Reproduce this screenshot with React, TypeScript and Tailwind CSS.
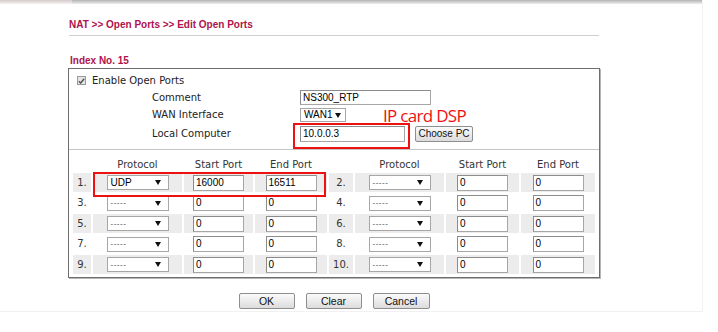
import React from "react";

const label = "font-['DejaVu_Sans',Verdana,sans-serif] text-[10px] leading-[12px] text-[#222]";
const arial = "font-['Liberation_Sans',Arial,sans-serif]";

function Arrow() {
  return (
    <svg width="6" height="5" viewBox="0 0 6 5">
      <path d="M0 0h6L3 5z" fill="#111" />
    </svg>
  );
}

function Dropdown({ value, className }: { value: string; className: string }) {
  return (
    <div
      className={`flex items-center justify-between border border-[#a6a6a6] bg-white pl-[3px] text-[10px] leading-none text-black ${arial} ${className}`}
    >
      <span className={value.startsWith("-") ? "text-[8px] tracking-[0.5px] text-[#444]" : ""}>{value}</span>
      <Arrow />
    </div>
  );
}

function TextBox({ value, className }: { value: string; className: string }) {
  return (
    <div
      className={`flex items-center border border-[#a6a6a6] border-t-[#8c8c8c] border-l-[#8c8c8c] bg-white pl-[2px] text-[10px] leading-none text-black ${arial} ${className}`}
    >
      {value}
    </div>
  );
}

function Btn({ text, className }: { text: string; className: string }) {
  return (
    <button
      className={`flex h-[16px] items-center justify-center rounded-[2px] border border-[#8e8e8e] bg-gradient-to-b from-[#fbfbfb] to-[#dcdcdc] leading-none text-[#111] ${arial} ${className}`}
    >
      {text}
    </button>
  );
}

type Half = { n: number; proto: string; start: string; end: string };

function HalfRow({ h, gray, right }: { h: Half; gray: boolean; right?: boolean }) {
  const bg = gray ? "bg-[#ececec]" : "bg-white";
  return (
    <>
      <div className={`flex h-full items-center justify-center ${bg} ${label} text-[#333] ${right ? "w-[24px]" : "w-[18px]"}`}>
        {h.n}.
      </div>
      <div className={`flex h-full w-[89px] items-center justify-center ${bg}`}>
        <Dropdown value={h.proto} className="h-[15px] w-[62px] pr-[7px]" />
      </div>
      <div className={`flex h-full items-center justify-center ${bg} ${right ? "w-[73px]" : "w-[69px]"}`}>
        <TextBox value={h.start} className="h-[16px] w-[51px]" />
      </div>
      <div className={`flex h-full items-center justify-center ${bg} ${right ? "w-[74px]" : "w-[72px]"}`}>
        <TextBox value={h.end} className="h-[16px] w-[51px]" />
      </div>
    </>
  );
}

function HeaderHalf({ right }: { right?: boolean }) {
  return (
    <>
      <div className={right ? "w-[24px]" : "w-[18px]"} />
      <div className={`w-[89px] text-center ${label} text-[#333]`}>Protocol</div>
      <div className={`text-center ${label} text-[#333] ${right ? "w-[73px]" : "w-[69px]"}`}>Start Port</div>
      <div className={`text-center ${label} text-[#333] ${right ? "w-[74px]" : "w-[72px]"}`}>End Port</div>
    </>
  );
}

export default function App() {
  const rows: [Half, Half][] = [1, 3, 5, 7, 9].map((n) => [
    n === 1
      ? { n, proto: "UDP", start: "16000", end: "16511" }
      : { n, proto: "-----", start: "0", end: "0" },
    { n: n + 1, proto: "-----", start: "0", end: "0" },
  ]);

  return (
    <div className="h-[332px] w-[718px] overflow-hidden bg-white">
      <div className="h-[312px] w-[703px] border-b border-r border-[#f1f1f1]">
        <div className="flex h-[4px]">
          <div className="w-[72px] bg-gradient-to-b from-[#d3cbcb] to-[#f7f3f3]" />
          <div className="flex-1 bg-gradient-to-b from-[#b3b3b3] to-[#eeeeee]" />
        </div>

        <div className="pl-[68px]">
          <div className={`mt-[15px] pl-[1px] text-[10px] font-bold leading-[12px] text-[#b0124c] ${arial}`}>
            NAT &gt;&gt; Open Ports &gt;&gt; Edit Open Ports
          </div>
          <div className="ml-[1px] mt-[4px] h-[1px] w-[530px] bg-[#cfcfcf]" />
          <div className={`mt-[19px] pl-[2px] text-[10px] font-bold leading-[12px] text-[#b0124c] ${arial}`}>
            Index No. 15
          </div>

          <div className="mt-[1px] w-[532px] border border-[#6e6e6e] pb-[3px] shadow-[1px_1px_0_#b5b5b5]">
            <div className="pt-[3px]">
              <div className="flex h-[17px] items-center gap-[6px] pl-[8px]">
                <span className="flex h-[9px] w-[9px] items-center justify-center border border-[#9a9a9a] bg-[#e6e6e6]">
                  <svg width="7" height="6" viewBox="0 0 7 6">
                    <path d="M0.8 3.2L2.7 5L6.2 0.8" stroke="#555" strokeWidth="1.5" fill="none" />
                  </svg>
                </span>
                <span className={label}>Enable Open Ports</span>
              </div>

              <div className="flex h-[17px] items-center pl-[83px]">
                <span className={`w-[148px] ${label}`}>Comment</span>
                <TextBox value="NS300_RTP" className="h-[15px] w-[131px]" />
              </div>
              <div className="flex h-[18px] items-center pl-[83px]">
                <span className={`w-[148px] ${label}`}>WAN Interface</span>
                <Dropdown value="WAN1" className="h-[14px] w-[46px] pr-[4px] text-[9.5px]" />
              </div>
              <div className="flex h-[19px] items-center pl-[83px]">
                <span className={`w-[148px] ${label}`}>Local Computer</span>
                <div className="relative">
                  <TextBox value="10.0.0.3" className="h-[16px] w-[105px]" />
                  <div className="absolute left-[-7px] top-[-3px] z-10 h-[26px] w-[117px] border-2 border-[#ee1111]" />
                  <div className="absolute left-[83px] top-[-19px] whitespace-nowrap font-['Open_Sans',sans-serif] text-[17px] leading-[17px] tracking-[-0.7px] text-[#ee1111]">
                    IP card DSP
                  </div>
                </div>
                <Btn text="Choose PC" className="ml-[10px] w-[58px] text-[10px]" />
              </div>
            </div>

            <div className="mt-[6px] h-[1px] bg-[#c4c4c4]" />

            <div className="flex h-[23px] items-end gap-[2px] pb-[2px] pl-[4px]">
              <HeaderHalf />
              <HeaderHalf right />
            </div>

            <div className="flex flex-col gap-[1.5px] pl-[4px]">
              {rows.map(([a, b], i) => (
                <div key={a.n} className={`relative flex h-[19px] gap-[2px] ${i === 0 ? "z-10" : ""}`}>
                  <HalfRow h={a} gray={i % 2 === 0} />
                  <HalfRow h={b} gray={i % 2 === 0} right />
                  {i === 0 && (
                    <div className="absolute left-[20px] top-[-1px] h-[25px] w-[233px] border-2 border-[#ee1111]" />
                  )}
                </div>
              ))}
            </div>
          </div>

          <div className="mt-[15px] flex w-[532px] justify-center gap-[11px]">
            <Btn text="OK" className="w-[56px] text-[10.5px]" />
            <Btn text="Clear" className="w-[56px] text-[10.5px]" />
            <Btn text="Cancel" className="w-[57px] text-[10.5px]" />
          </div>
        </div>
      </div>
    </div>
  );
}
